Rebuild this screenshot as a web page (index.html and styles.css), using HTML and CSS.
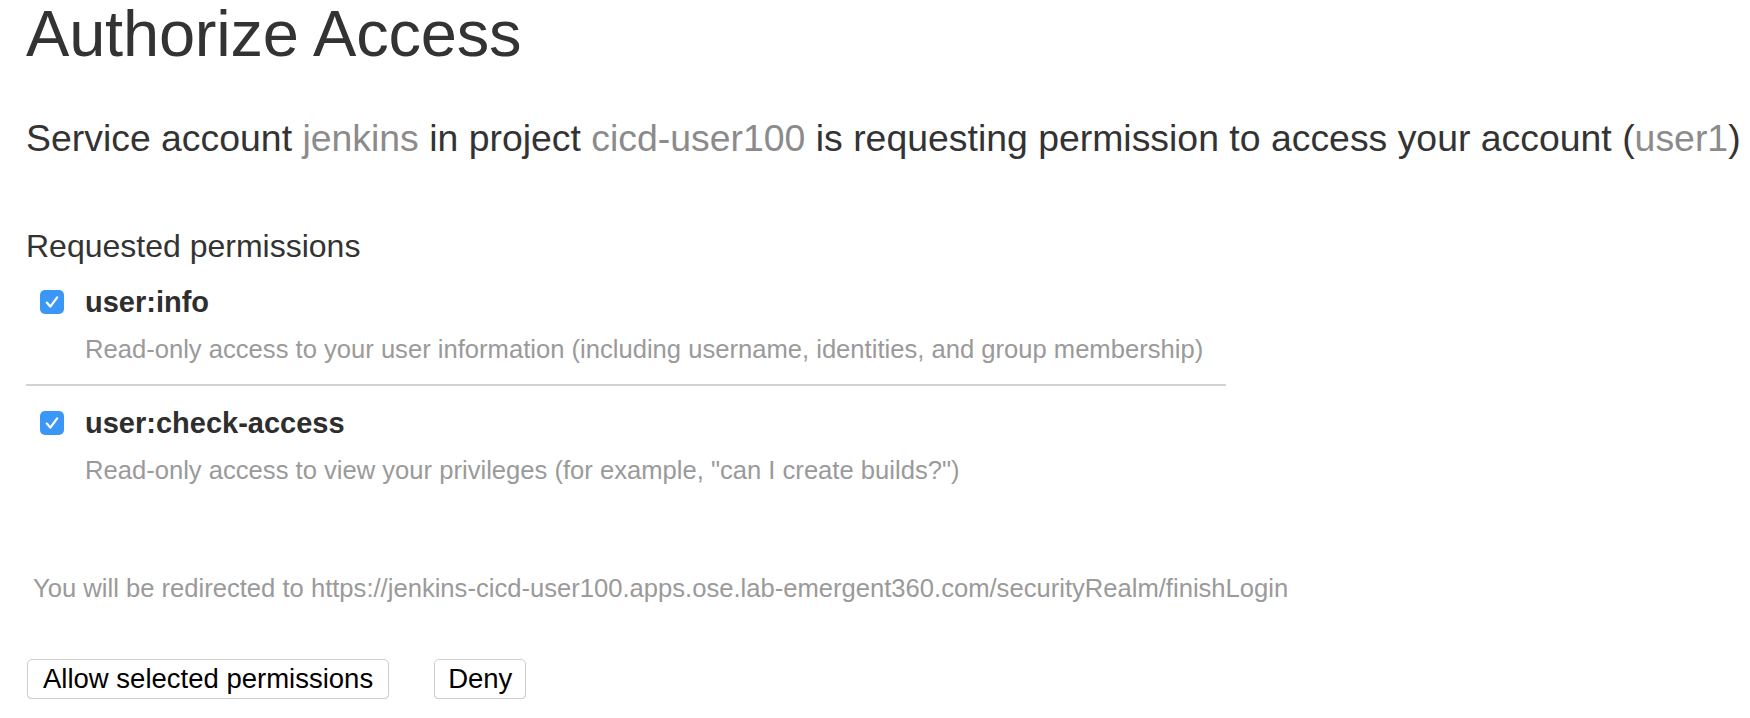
FILE: index.html
```html
<!DOCTYPE html>
<html lang="en">
<head>
<meta charset="utf-8">
<title>Authorize Access</title>
<link rel="stylesheet" href="styles.css">
</head>
<body>
<main class="page">
  <h1 class="title">Authorize Access</h1>
  <p class="lead">Service account <span class="muted">jenkins</span> in project <span class="muted">cicd-user100</span> is requesting permission to access your account (<span class="muted">user1</span>)</p>

  <section class="perms">
    <h2 class="perms-title">Requested permissions</h2>

    <div class="perm">
      <label class="perm-row">
        <span class="check"><svg viewBox="0 0 24 24" width="24" height="24"><path d="M6.8 12.6 L10.3 16.6 L17.2 7.4" fill="none" stroke="#fff" stroke-width="2.3" stroke-linecap="round" stroke-linejoin="round"/></svg></span>
        <span class="perm-name">user:info</span>
      </label>
      <div class="perm-desc">Read-only access to your user information (including username, identities, and group membership)</div>
    </div>

    <div class="divider"></div>

    <div class="perm">
      <label class="perm-row">
        <span class="check"><svg viewBox="0 0 24 24" width="24" height="24"><path d="M6.8 12.6 L10.3 16.6 L17.2 7.4" fill="none" stroke="#fff" stroke-width="2.3" stroke-linecap="round" stroke-linejoin="round"/></svg></span>
        <span class="perm-name">user:check-access</span>
      </label>
      <div class="perm-desc">Read-only access to view your privileges (for example, "can I create builds?")</div>
    </div>
  </section>

  <p class="redirect">You will be redirected to https://jenkins-cicd-user100.apps.ose.lab-emergent360.com/securityRealm/finishLogin</p>

  <div class="actions">
    <button class="btn" type="button">Allow selected permissions</button>
    <button class="btn btn-short" type="button">Deny</button>
  </div>
</main>
</body>
</html>
```

FILE: styles.css
```css
html, body {
  margin: 0;
  padding: 0;
  background: #ffffff;
}

body {
  font-family: "Liberation Sans", Arial, Helvetica, sans-serif;
  color: #333333;
}

.page {
  padding: 0 0 0 26px;
  width: 1200px;
}

.title {
  margin: 0;
  font-size: 65px;
  line-height: 68px;
  font-weight: normal;
  color: #333333;
  letter-spacing: -0.2px;
}

.lead {
  margin: 48px 0 0 0;
  font-size: 37.4px;
  line-height: 44px;
  white-space: nowrap;
  color: #333333;
}

.muted {
  color: #8b8b8b;
}

.perms {
  margin-top: 68px;
}

.perms-title {
  margin: 0;
  font-size: 32px;
  line-height: 36px;
  font-weight: normal;
  color: #333333;
}

.perm {
  display: flex;
  flex-direction: column;
}

.perms-title + .perm {
  margin-top: 22px;
}

.perm-row {
  display: flex;
  align-items: center;
  height: 32px;
  padding-left: 14px;
}

.check {
  display: block;
  width: 24px;
  height: 24px;
  border-radius: 5px;
  background: #3a96f7;
  margin-right: 21px;
}

.check svg {
  display: block;
}

.perm-name {
  font-size: 29px;
  line-height: 32px;
  font-weight: bold;
  color: #2e2e2e;
}

.perm-desc {
  margin-top: 16px;
  padding-left: 59px;
  font-size: 25.6px;
  line-height: 30px;
  color: #9a9a9a;
  white-space: nowrap;
}

.divider {
  margin: 20px 0 21px 0;
  height: 2px;
  background: #d2d2d2;
  width: 1200px;
}

.redirect {
  margin: 88px 0 0 7px;
  font-size: 25.6px;
  line-height: 30px;
  color: #9a9a9a;
  white-space: nowrap;
}

.actions {
  display: flex;
  gap: 45px;
  margin: 56px 0 0 1px;
}

.btn {
  height: 40px;
  padding: 0 15px;
  font-family: "Liberation Sans", Arial, Helvetica, sans-serif;
  font-size: 27.5px;
  color: #000000;
  background: #ffffff;
  border: 1px solid #cfcfcf;
  border-radius: 5px;
  box-shadow: 0 1px 1px rgba(0, 0, 0, 0.12);
}

.btn-short {
  padding: 0 13px;
}
```
